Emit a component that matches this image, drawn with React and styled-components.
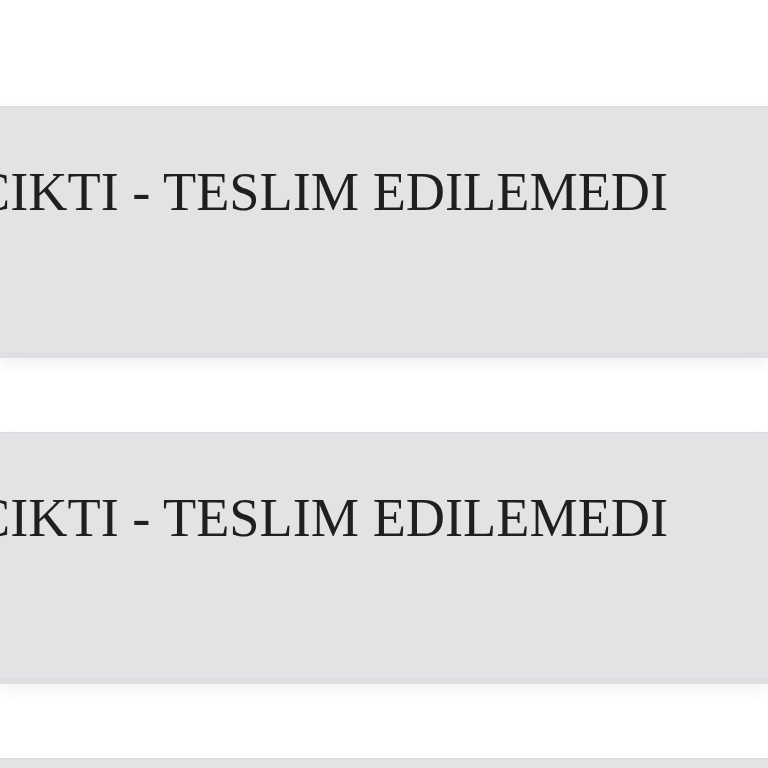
import React from "react";
import styled, { createGlobalStyle } from "styled-components";

const Global = createGlobalStyle`
  html, body { margin: 0; padding: 0; background: #ffffff; overflow: hidden; }
  body { font-family: "Liberation Serif", "Times New Roman", serif; }
`;

const List = styled.div`
  display: flex;
  flex-direction: column;
  gap: 74px;
  padding-top: 106px;
  width: 768px;
  height: 768px;
  box-sizing: border-box;
  overflow: hidden;
`;

const Item = styled.div`
  flex: 0 0 252px;
  box-sizing: border-box;
  background: #e2e3e5;
  border-top: 1px solid #dcdde0;
  box-shadow: inset 0 -6px 0 #dedfe2, 0 6px 14px rgba(0, 0, 0, 0.06);
  padding-top: 57px;
  overflow: hidden;
`;

const Status = styled.div`
  font-size: 54.3px;
  line-height: 56px;
  color: #1f1f1f;
  white-space: nowrap;
  margin-left: -26px;
`;

const items = ["ÇIKTI - TESLIM EDILEMEDI", "ÇIKTI - TESLIM EDILEMEDI", ""];

export default function App() {
  return (
    <>
      <Global />
      <List>
        {items.map((t, i) => (
          <Item key={i}>
            <Status>{t}</Status>
          </Item>
        ))}
      </List>
    </>
  );
}
